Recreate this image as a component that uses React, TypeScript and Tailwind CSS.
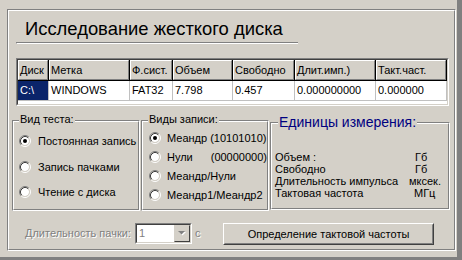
import React from 'react'

const COLS = [
  { h: 'Диск', v: 'C:\\', w: 'w-[31px]' },
  { h: 'Метка', v: 'WINDOWS', w: 'w-[81px]' },
  { h: 'Ф.сист.', v: 'FAT32', w: 'w-[43px]' },
  { h: 'Объем', v: '7.798', w: 'w-[60px]' },
  { h: 'Свободно', v: '0.457', w: 'w-[62px]' },
  { h: 'Длит.имп.)', v: '0.000000000', w: 'w-[81px]' },
  { h: 'Такт.част.', v: '0.000000', w: 'w-[71px]' },
]

const UNITS = [
  { name: 'Объем :', unit: 'Гб', cls: '' },
  { name: 'Свободно', unit: 'Гб', cls: '' },
  { name: 'Длительность импульса', unit: 'мксек.', cls: 'ml-[-6px]' },
  { name: 'Тактовая частота', unit: 'МГц', cls: 'ml-[-1px]' },
]

function Radio({ checked }: { checked?: boolean }) {
  return (
    <svg width="12" height="12" viewBox="0 0 12 12" className="shrink-0">
      <circle cx="6" cy="6" r="4" fill="#fff" />
      <path d="M2.11 9.89 A5.5 5.5 0 0 1 9.89 2.11" fill="none" stroke="#808080" />
      <path d="M9.89 2.11 A5.5 5.5 0 0 1 2.11 9.89" fill="none" stroke="#fff" />
      <path d="M2.82 9.18 A4.5 4.5 0 0 1 9.18 2.82" fill="none" stroke="#404040" />
      <path d="M9.18 2.82 A4.5 4.5 0 0 1 2.82 9.18" fill="none" stroke="#d4d0c8" />
      {checked && <circle cx="6" cy="6" r="2" fill="#000" />}
    </svg>
  )
}

function Group({ className, children }: { className: string; children: React.ReactNode }) {
  return (
    <div className={`relative border border-t-[#808080] border-l-[#808080] border-r-white border-b-white ${className}`}>
      <div className="h-full border border-t-white border-l-white border-r-[#808080] border-b-[#808080]">
        {children}
      </div>
    </div>
  )
}

export default function App() {
  return (
    <div className="w-[462px] h-[260px] overflow-hidden bg-[#d4d0c8] border-r-[5px] border-b-[3px] border-[#808080] font-['Liberation_Sans',Arial,sans-serif] text-[11px] leading-[13px] text-black">
      <div className="ml-[7px] mt-[9px] w-[449px] h-[242px] border border-t-[#808080] border-l-[#808080] border-r-white border-b-white">
        <div className="h-full border border-t-white border-l-white border-r-[#808080] border-b-[#808080]">
          <div className="ml-[16px] mt-[7px] h-[22px] text-[18.4px] leading-[22px] whitespace-nowrap">Исследование жесткого диска</div>
          <div className="ml-[7px] mt-[2px] w-[282px] h-[2px] border-t border-b border-l border-t-[#808080] border-l-[#808080] border-b-white" />

          {/* disk grid */}
          <div className="mt-[14px] ml-[7px] w-[433px] h-[48px] border border-t-[#808080] border-l-[#808080] border-r-white border-b-white">
            <div className="h-full border border-t-[#404040] border-l-[#404040] border-r-[#d4d0c8] border-b-[#d4d0c8] bg-white">
              <div className="flex">
                {COLS.map(c => (
                  <div key={c.h} className={`${c.w} h-[21px] border-r border-b border-black`}>
                    <div className="h-full border border-t-white border-l-white border-r-[#808080] border-b-[#808080] bg-[#d4d0c8] pl-[1px] leading-[19px] whitespace-nowrap overflow-hidden">
                      {c.h}
                    </div>
                  </div>
                ))}
              </div>
              <div className="flex">
                {COLS.map((c, i) => (
                  <div key={c.h} className={`${c.w} h-[20px] border-r border-b border-[#c0c0c0] pl-[2px] leading-[19px] whitespace-nowrap overflow-hidden ${i === 0 ? 'bg-[#0a246a] text-white' : ''}`}>
                    {c.v}
                  </div>
                ))}
              </div>
            </div>
          </div>

          {/* groups */}
          <div className="flex items-start mt-[14px] ml-[3px]">
            <Group className="w-[128px] h-[91px]">
              <span className="absolute top-[-8px] left-[6px] px-[1px] bg-[#d4d0c8]">Вид теста:</span>
              <div className="flex flex-col pl-[5px] pt-[13px]">
                <div className="flex items-center gap-[7px] h-[12px]"><Radio checked /><span>Постоянная запись</span></div>
                <div className="flex items-center gap-[7px] h-[12px] mt-[14px]"><Radio /><span>Запись пачками</span></div>
                <div className="flex items-center gap-[7px] h-[12px] mt-[13px]"><Radio /><span>Чтение с диска</span></div>
              </div>
            </Group>
            <Group className="ml-[1px] w-[128px] h-[91px]">
              <span className="absolute top-[-8px] left-[6px] px-[1px] bg-[#d4d0c8]">Виды записи:</span>
              <div className="flex flex-col gap-[7px] pl-[6px] pt-[10px] whitespace-nowrap">
                <div className="flex items-center gap-[6px] h-[12px]"><Radio checked /><span>Меандр (10101010)</span></div>
                <div className="flex items-center gap-[6px] h-[12px]"><Radio /><span className="w-[44px]">Нули</span><span>(00000000)</span></div>
                <div className="flex items-center gap-[6px] h-[12px]"><Radio /><span>Меандр/Нули</span></div>
                <div className="flex items-center gap-[6px] h-[12px]"><Radio /><span>Меандр1/Меандр2</span></div>
              </div>
            </Group>
            <Group className="ml-[1px] mt-[2px] w-[180px] h-[88px]">
              <span className="absolute top-[-9px] left-[7px] px-[1px] bg-[#d4d0c8] text-[14px] leading-[16px] text-[#000080]">Единицы измерения:</span>
              <div className="grid grid-cols-[140px_1fr] pl-[3px] pt-[27px] leading-[12px] whitespace-nowrap">
                {UNITS.map(u => (
                  <React.Fragment key={u.name}>
                    <span>{u.name}</span>
                    <span className={u.cls}>{u.unit}</span>
                  </React.Fragment>
                ))}
              </div>
            </Group>
          </div>

          {/* bottom controls */}
          <div className="flex items-start mt-[12px] ml-[16px]">
            <span className="w-[110px] leading-[21px] text-[#808080] [text-shadow:1px_1px_0_#fff] whitespace-nowrap">Длительность пачки:</span>
            <div className="w-[57px] h-[21px] border border-t-[#808080] border-l-[#808080] border-r-white border-b-white">
              <div className="h-full flex border border-t-[#404040] border-l-[#404040] border-r-[#d4d0c8] border-b-[#d4d0c8] bg-white">
                <span className="flex-1 pl-[2px] leading-[17px] text-[#808080]">1</span>
                <div className="w-[16px] h-full flex items-center justify-center border border-t-[#d4d0c8] border-l-[#d4d0c8] border-r-[#404040] border-b-[#404040] bg-[#d4d0c8]">
                  <svg width="8" height="5" viewBox="0 0 8 5">
                    <path d="M1 1h7L4.5 4.5z" fill="#fff" />
                    <path d="M0 0h7L3.5 3.5z" fill="#808080" />
                  </svg>
                </div>
              </div>
            </div>
            <span className="w-[31px] pl-[3px] leading-[21px] text-[#808080] [text-shadow:1px_1px_0_#fff]">с</span>
            <button className="w-[211px] h-[22px] border border-t-white border-l-white border-r-[#404040] border-b-[#404040] bg-[#d4d0c8] p-0">
              <div className="h-full flex items-center justify-center border border-t-[#d4d0c8] border-l-[#d4d0c8] border-r-[#808080] border-b-[#808080]">
                Определение тактовой частоты
              </div>
            </button>
          </div>
        </div>
      </div>
    </div>
  )
}
